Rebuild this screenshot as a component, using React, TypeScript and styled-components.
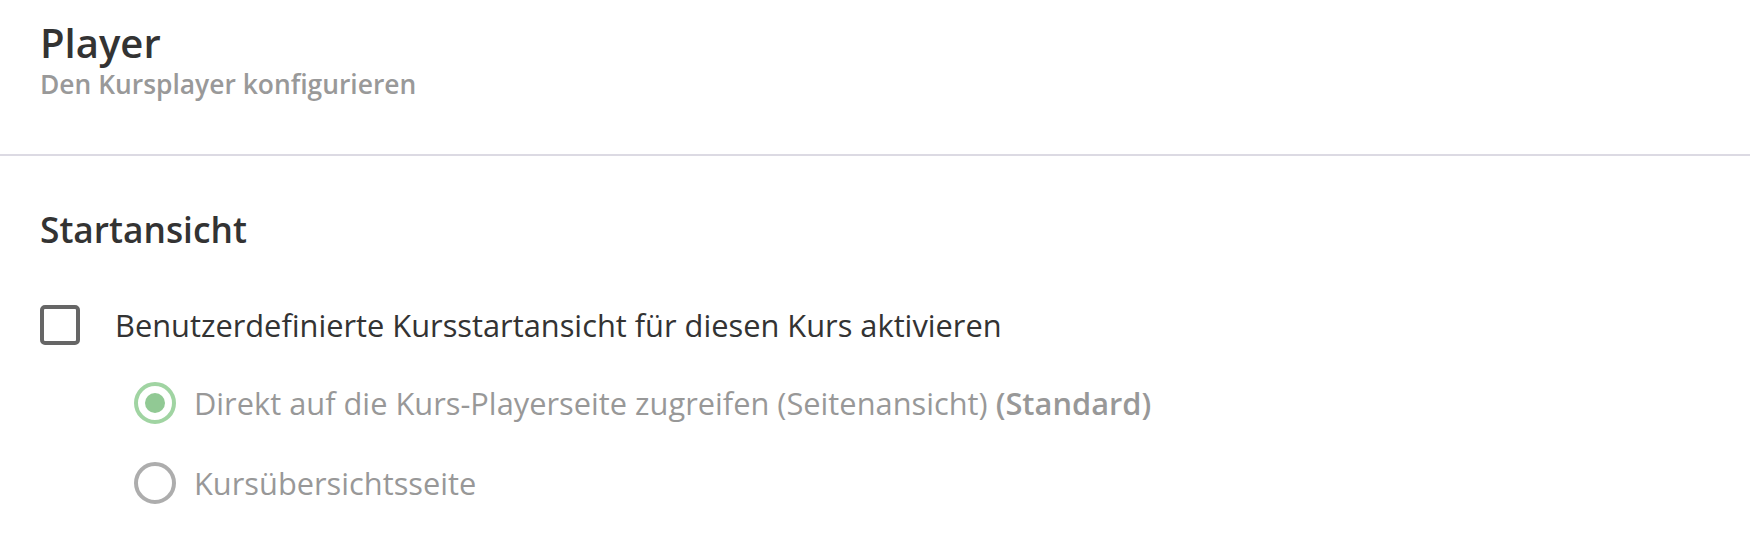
import React from "react";
import styled, { createGlobalStyle } from "styled-components";

const GlobalStyle = createGlobalStyle`
  html, body {
    margin: 0;
    padding: 0;
    background: #ffffff;
  }
  body {
    font-family: "Open Sans", "Noto Sans", Arial, sans-serif;
    color: #333333;
  }
`;

const Page = styled.div`
  display: flex;
  flex-direction: column;
  width: 1750px;
`;

const Header = styled.header`
  display: flex;
  flex-direction: column;
  padding: 18px 40px 54px;
  border-bottom: 2px solid #dcdae3;
`;

const Title = styled.h1`
  margin: 0;
  font-size: 40px;
  line-height: 50px;
  font-weight: 600;
  color: #333333;
`;

const Subtitle = styled.p`
  margin: 0;
  font-size: 26.4px;
  line-height: 32px;
  font-weight: 600;
  color: #999999;
`;

const Section = styled.section`
  display: flex;
  flex-direction: column;
  padding: 49px 40px 0;
`;

const SectionTitle = styled.h2`
  margin: 0 0 42px;
  font-size: 35.3px;
  line-height: 48px;
  font-weight: 600;
  color: #333333;
`;

const OptionRow = styled.label`
  display: flex;
  align-items: center;
  gap: 35px;
  height: 60px;
  font-size: 30.8px;
  color: #333333;
  cursor: pointer;
`;

const CheckBox = styled.span`
  box-sizing: border-box;
  width: 40px;
  height: 40px;
  border: 4px solid #666666;
  border-radius: 5px;
  background: #ffffff;
  flex-shrink: 0;
`;

const RadioGroup = styled.div<{ $disabled?: boolean }>`
  display: flex;
  flex-direction: column;
  gap: 18px;
  padding-left: 94px;
  margin-top: 17px;
  opacity: ${(p) => (p.$disabled ? 0.5 : 1)};
`;

const RadioRow = styled.label`
  display: flex;
  align-items: center;
  gap: 18px;
  height: 62px;
  font-size: 30.8px;
  color: #333333;
`;

const RadioCircle = styled.span<{ $checked?: boolean }>`
  box-sizing: border-box;
  width: 42px;
  height: 42px;
  border-radius: 50%;
  border: 4px solid ${(p) => (p.$checked ? "#43aa47" : "#5e5e5e")};
  display: flex;
  align-items: center;
  justify-content: center;
  flex-shrink: 0;

  &::after {
    content: "";
    display: ${(p) => (p.$checked ? "block" : "none")};
    width: 20px;
    height: 20px;
    border-radius: 50%;
    background: #25952b;
  }
`;

const Strong = styled.strong`
  font-weight: 600;
`;

export default function App() {
  return (
    <>
      <GlobalStyle />
      <Page>
        <Header>
          <Title>Player</Title>
          <Subtitle>Den Kursplayer konfigurieren</Subtitle>
        </Header>
        <Section>
          <SectionTitle>Startansicht</SectionTitle>
          <OptionRow>
            <CheckBox />
            Benutzerdefinierte Kursstartansicht für diesen Kurs aktivieren
          </OptionRow>
          <RadioGroup $disabled>
            <RadioRow>
              <RadioCircle $checked />
              <span>
                Direkt auf die Kurs-Playerseite zugreifen (Seitenansicht){" "}
                <Strong>(Standard)</Strong>
              </span>
            </RadioRow>
            <RadioRow>
              <RadioCircle />
              <span>Kursübersichtsseite</span>
            </RadioRow>
          </RadioGroup>
        </Section>
      </Page>
    </>
  );
}
